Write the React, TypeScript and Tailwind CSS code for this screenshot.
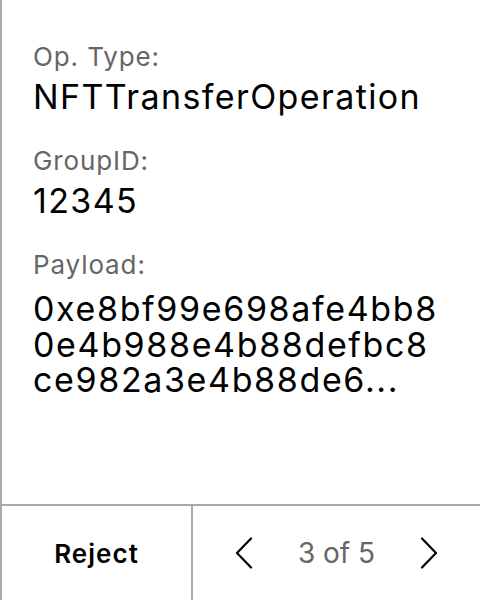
const fields = [
  { label: "Op. Type:", value: "NFTTransferOperation" },
  { label: "GroupID:", value: "12345" },
];

const payload = ["0xe8bf99e698afe4bb8", "0e4b988e4b88defbc8", "ce982a3e4b88de6..."];

function Chevron({ dir }: { dir: "left" | "right" }) {
  return (
    <svg width="18" height="32" viewBox="0 0 18 32" fill="none" stroke="black" strokeWidth="2.2" strokeLinecap="round" strokeLinejoin="round">
      {dir === "left" ? <polyline points="16,1.5 2,16 16,30.5" /> : <polyline points="2,1.5 16,16 2,30.5" />}
    </svg>
  );
}

export default function App() {
  return (
    <div className="flex h-[600px] w-[480px] flex-col border-l-2 border-[#aaaaaa] bg-white font-['Inter',sans-serif] text-black">
      {/* Details */}
      <div className="flex flex-1 flex-col px-[31px] pt-[39px]">
        {fields.map((f) => (
          <div key={f.label} className="mb-[24px]">
            <p className="text-[26px] leading-[36px] tracking-[0.034em] text-[#666666]">{f.label}</p>
            <p className="text-[34px] leading-[44px] tracking-[0.041em]">{f.value}</p>
          </div>
        ))}
        <p className="text-[26px] leading-[36px] tracking-[0.034em] text-[#666666]">Payload:</p>
        <div className="mt-[8px] flex flex-col text-[34px] tracking-[0.048em]">
          {payload.map((line) => (
            <span key={line} className="block leading-[35.5px]">
              {line}
            </span>
          ))}
        </div>
      </div>

      {/* Footer */}
      <div className="flex h-[96px] border-t-2 border-[#aaaaaa]">
        <button className="flex w-[191px] items-center justify-center border-r-2 border-[#aaaaaa] text-[26px] font-semibold tracking-[0.04em]">
          Reject
        </button>
        <div className="flex flex-1 items-center justify-between px-[42px]">
          <Chevron dir="left" />
          <span className="text-[28px] text-[#666666]">3 of 5</span>
          <Chevron dir="right" />
        </div>
      </div>
    </div>
  );
}
